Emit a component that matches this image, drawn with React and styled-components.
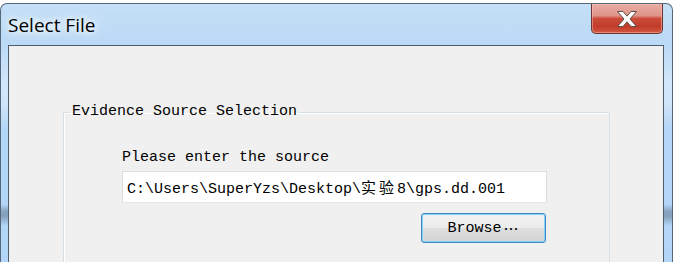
import styled, {createGlobalStyle} from "styled-components";

const Global = createGlobalStyle`
  html, body {
    margin: 0;
    padding: 0;
    background: #ffffff;
    overflow: hidden;
  }
`;

const mono = `"Liberation Mono", "Noto Sans CJK SC", monospace`;

function App() {
    return (
        <>
            <Global/>
            <Window>
                <TitleBar>
                    <Title>Select File</Title>
                    <CloseButton aria-label="Close">
                        <svg width="20" height="16" viewBox="0 0 20 16">
                            <polygon
                                points="0.5,0.5 6,0.5 10,5.2 14,0.5 19.5,0.5 13,8 19.5,15.5 14,15.5 10,10.8 6,15.5 0.5,15.5 7,8"
                                fill="#ffffff" stroke="#5b4f4f" strokeWidth="1" strokeLinejoin="round"/>
                        </svg>
                    </CloseButton>
                </TitleBar>
                <Client>
                    <GroupBox>
                        <Legend>Evidence Source Selection</Legend>
                        <Form>
                            <Label>Please enter the source</Label>
                            <PathField>
                                C:\Users\SuperYzs\Desktop\<Wide>实验</Wide>8\gps.dd.001
                            </PathField>
                            <BrowseButton>Browse<Dots>…</Dots></BrowseButton>
                        </Form>
                    </GroupBox>
                </Client>
            </Window>
        </>
    );
}

const Window = styled.div`
  box-sizing: border-box;
  width: 673px;
  height: 259px;
  margin-top: 3px;
  display: flex;
  flex-direction: column;
  border: 1px solid #55677a;
  border-bottom: none;
  border-radius: 7px 7px 0 0;
  overflow: hidden;
  background: linear-gradient(to bottom, transparent 200px, rgba(95, 118, 140, 0.55) 208px, rgba(95, 118, 140, 0.55) 212px, transparent 222px),
  linear-gradient(to bottom, #c4dff6 0, #bbdaf6 40px, #d2e7f9 80px, #cfe5f9 100px, #b4d6f7 125px, #b3d6f8 100%);
`;

const TitleBar = styled.div`
  height: 41px;
  flex-shrink: 0;
  display: flex;
  align-items: flex-start;
  padding-left: 7px;
`;

const Title = styled.div`
  margin-top: 10px;
  font-family: "Open Sans", sans-serif;
  font-size: 19px;
  line-height: 22px;
  color: #000;
  text-shadow: 0 0 6px #ffffff, 0 0 10px #ffffff, 0 0 16px #eaf5ff;
`;

const CloseButton = styled.div`
  box-sizing: border-box;
  margin-left: auto;
  margin-right: 9px;
  width: 72px;
  height: 30px;
  display: flex;
  align-items: center;
  justify-content: center;
  border: 1px solid #6b3530;
  border-top: none;
  border-radius: 0 0 5px 5px;
  background: linear-gradient(to bottom, #e9aca4 0%, #df9488 40%, #cb4c3a 50%, #c23b29 78%, #d15a43 100%);
  box-shadow: inset 0 0 0 1px rgba(255, 200, 190, 0.45);
`;

const Client = styled.div`
  flex: 1;
  margin: 0 8px 0 7px;
  border: 1px solid #4d5c6d;
  border-bottom: none;
  background: #f0f0f0;
  padding-top: 57px;
`;

const GroupBox = styled.fieldset`
  margin: 0 53px 0 54px;
  padding: 28px 0 0 58px;
  height: 200px;
  border: 1px solid #d5dfe5;
  border-bottom: none;
  box-shadow: inset 1px 1px 0 #ffffff;
`;

const Legend = styled.legend`
  margin-left: -52px;
  padding: 0 2px;
  font-family: ${mono};
  font-size: 15px;
  line-height: 18px;
  color: #000;
`;

const Form = styled.div`
  width: 425px;
  display: flex;
  flex-direction: column;
  align-items: flex-end;
`;

const Label = styled.div`
  align-self: stretch;
  font-family: ${mono};
  font-size: 15px;
  line-height: 18px;
  color: #000;
  margin-bottom: 4px;
`;

const PathField = styled.div`
  box-sizing: border-box;
  align-self: stretch;
  height: 32px;
  padding: 5px 4px 0;
  background: #ffffff;
  border: 1px solid #dcdde3;
  border-bottom-color: #e6e7ec;
  font-family: ${mono};
  font-size: 15px;
  line-height: 20px;
  color: #000;
  white-space: pre;
`;

const Wide = styled.span`
  font-family: "Noto Sans CJK SC", sans-serif;
  letter-spacing: 3px;
`;

const BrowseButton = styled.div`
  box-sizing: border-box;
  margin-top: 10px;
  margin-right: 1px;
  width: 125px;
  height: 30px;
  display: flex;
  align-items: center;
  justify-content: center;
  border: 1px solid #3a8cc6;
  border-radius: 3px;
  box-shadow: inset 0 0 0 1px #86d0f4;
  background: linear-gradient(to bottom, #f3f3f3 0%, #ececec 48%, #dedede 52%, #d2d3d3 100%);
  font-family: ${mono};
  font-size: 15px;
  color: #000;
`;

const Dots = styled.span`
  font-family: "Noto Sans CJK SC", sans-serif;
  display: inline-block;
  width: 18px;
  text-align: center;
  letter-spacing: -1px;
  vertical-align: 4px;
`;

export default App;
